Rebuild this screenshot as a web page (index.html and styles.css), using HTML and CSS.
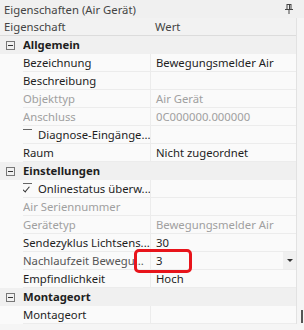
FILE: index.html
```html
<!DOCTYPE html>
<html lang="de">
<head>
    <meta charset="UTF-8">
    <title>Eigenschaften</title>
    <link rel="stylesheet" href="styles.css">
</head>
<body>
    <div class="panel">
        <div class="titlebar">
            <span>Eigenschaften (Air Gerät)</span>
            <svg class="pin" width="8" height="10" viewBox="0 0 8 10">
                <rect x="2" y="0.5" width="4" height="5" fill="none" stroke="#444" stroke-width="1"/>
                <rect x="4" y="1" width="1" height="4" fill="#444"/>
                <rect x="0" y="5" width="8" height="1" fill="#444"/>
                <rect x="3.5" y="6" width="1" height="4" fill="#444"/>
            </svg>
        </div>

        <div class="body">
            <div class="grid">
                <div class="row header">
                    <div class="name">Eigenschaft</div>
                    <div class="value">Wert</div>
                </div>

                <div class="row group">
                    <span class="toggle"></span>
                    <div class="name">Allgemein</div>
                </div>
                <div class="row">
                    <div class="name">Bezeichnung</div>
                    <div class="value">Bewegungsmelder Air</div>
                </div>
                <div class="row">
                    <div class="name">Beschreibung</div>
                    <div class="value"></div>
                </div>
                <div class="row disabled">
                    <div class="name">Objekttyp</div>
                    <div class="value">Air Gerät</div>
                </div>
                <div class="row disabled">
                    <div class="name">Anschluss</div>
                    <div class="value">0C000000.000000</div>
                </div>
                <div class="row">
                    <div class="name check"><span class="box"></span>Diagnose-Eingänge...</div>
                    <div class="value"></div>
                </div>
                <div class="row">
                    <div class="name">Raum</div>
                    <div class="value">Nicht zugeordnet</div>
                </div>

                <div class="row group">
                    <span class="toggle"></span>
                    <div class="name">Einstellungen</div>
                </div>
                <div class="row">
                    <div class="name check"><span class="box checked"></span>Onlinestatus überw...</div>
                    <div class="value"></div>
                </div>
                <div class="row disabled">
                    <div class="name">Air Seriennummer</div>
                    <div class="value"></div>
                </div>
                <div class="row disabled">
                    <div class="name">Gerätetyp</div>
                    <div class="value">Bewegungsmelder Air</div>
                </div>
                <div class="row">
                    <div class="name">Sendezyklus Lichtsens...</div>
                    <div class="value">30</div>
                </div>
                <div class="row selected">
                    <div class="name">Nachlaufzeit Bewegu...</div>
                    <div class="value">3<span class="drop"></span></div>
                </div>
                <div class="row">
                    <div class="name">Empfindlichkeit</div>
                    <div class="value">Hoch</div>
                </div>

                <div class="row group">
                    <span class="toggle"></span>
                    <div class="name">Montageort</div>
                </div>
                <div class="row">
                    <div class="name">Montageort</div>
                    <div class="value"></div>
                </div>

                <div class="highlight"></div>
            </div>
            <div class="scrollbar"><span class="thumb"></span></div>
        </div>
    </div>
</body>
</html>
```

FILE: styles.css
```css
body {
    margin: 0;
    font-family: "Noto Sans", "Open Sans", sans-serif;
    font-size: 11.3px;
    color: #1e1e1e;
    background-color: #fff;
}
.panel {
    width: 304px;
    height: 330px;
    background-color: #f5f5f5;
    overflow: hidden;
}
.titlebar {
    height: 18px;
    display: flex;
    align-items: center;
    justify-content: space-between;
    padding: 0 11px 0 4px;
    color: #444;
    background-color: #f0f0f0;
}
.body {
    display: flex;
}
.grid {
    position: relative;
    width: 296px;
    border-right: 1px solid #e2e2e2;
}
.scrollbar {
    flex: 1;
    position: relative;
    background-color: #f5f5f5;
}
.thumb {
    position: absolute;
    right: 1px;
    top: 292px;
    width: 2px;
    height: 13px;
    background-color: #555;
}
.row {
    display: flex;
    height: 18px;
    line-height: 18px;
    background-color: #fafafa;
}
.row .name {
    width: 127px;
    margin-left: 23px;
    padding-right: 2px;
    white-space: nowrap;
    overflow: hidden;
    border-bottom: 1px solid #ececec;
    box-sizing: border-box;
}
.row .value {
    flex: 1;
    padding-left: 5px;
    border-bottom: 1px solid #ececec;
    border-left: 1px solid #ececec;
    white-space: nowrap;
    position: relative;
}
.row.header {
    background-color: #f2f2f2;
    color: #444;
}
.row.header .name {
    margin-left: 0;
    padding-left: 4px;
    width: 150px;
    border-bottom: 1px solid #dcdcdc;
}
.row.header .value {
    border-left: none;
    border-bottom: 1px solid #dcdcdc;
}
.row.group {
    background-color: #f0f0f0;
    font-weight: bold;
    align-items: center;
}
.row.group .name {
    margin-left: 8px;
    width: auto;
    border-bottom: none;
}
.toggle {
    width: 9px;
    height: 9px;
    margin-left: 6px;
    border: 1px solid #777;
    box-sizing: border-box;
    position: relative;
    flex: none;
}
.toggle::after {
    content: "";
    position: absolute;
    left: 1px;
    right: 1px;
    top: 3px;
    height: 1px;
    background-color: #333;
}
.row.disabled {
    color: #a0a0a0;
}
.row.selected .name {
    color: #555;
}
.check {
    display: flex;
    align-items: center;
}
.box {
    width: 11px;
    height: 11px;
    margin-right: 6px;
    margin-left: -2px;
    border-left: 1px solid #666;
    border-top: 1px solid #666;
    box-sizing: border-box;
    position: relative;
    flex: none;
}
.box.checked::after {
    content: "";
    position: absolute;
    left: 2px;
    top: 1px;
    width: 3px;
    height: 6px;
    border-right: 1px solid #333;
    border-bottom: 1px solid #333;
    transform: rotate(40deg);
}
.drop {
    position: absolute;
    right: 0;
    top: 0;
    width: 13px;
    height: 17px;
    background-color: #f0f0f0;
}
.drop::after {
    content: "";
    position: absolute;
    left: 4px;
    top: 7px;
    border-left: 3px solid transparent;
    border-right: 3px solid transparent;
    border-top: 3px solid #333;
}
.highlight {
    position: absolute;
    left: 134px;
    top: 231px;
    width: 58px;
    height: 24px;
    border: 3px solid #e8141b;
    border-radius: 5px;
    box-sizing: border-box;
}
```
